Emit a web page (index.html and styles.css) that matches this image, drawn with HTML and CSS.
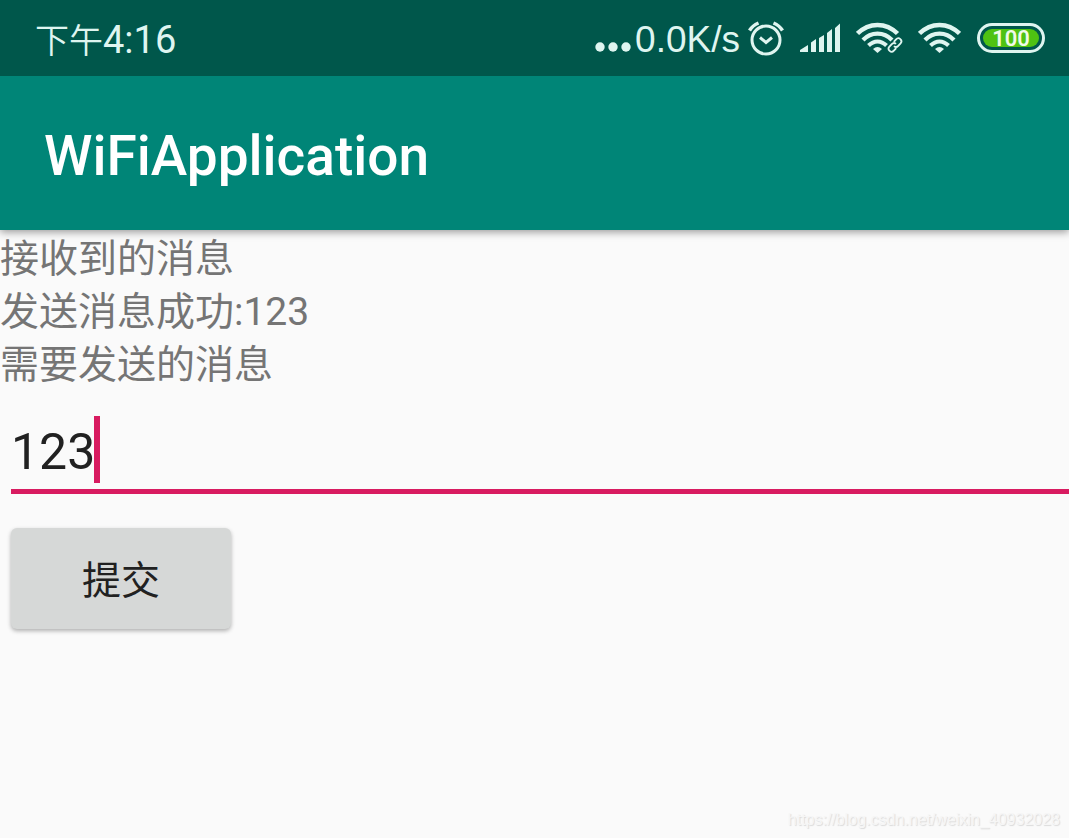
FILE: index.html
```
<!DOCTYPE html>
<html lang="zh-CN">
<head>
    <meta charset="UTF-8">
    <meta name="viewport" content="width=device-width, initial-scale=1.0">
    <title>WiFiApplication</title>
    <link rel="stylesheet" href="styles.css">
</head>
<body>
    <div class="status-bar">
        <div class="clock"><span class="clock-period">下午</span>4:16</div>
        <div class="status-icons">
            <svg class="dots" width="36" height="12" viewBox="0 0 36 12" fill="currentColor">
                <circle cx="5" cy="6" r="4.7"/>
                <circle cx="18" cy="6" r="4.7"/>
                <circle cx="31" cy="6" r="4.7"/>
            </svg>
            <span class="speed">0.0K/s</span>
            <!-- alarm -->
            <svg class="alarm" width="36" height="36" viewBox="0 0 36 36" fill="none" stroke="currentColor">
                <circle cx="18" cy="20" r="14" stroke-width="3"/>
                <path d="M12 17.500l6 5 6-5" stroke-width="3"/>
                <path d="M1.500 10.500Q4.500 5.500 10.500 3M34.500 10.500Q31.500 5.500 25.500 3" stroke-width="3.500"/>
            </svg>
            <!-- signal -->
            <svg class="signal" width="41" height="30" viewBox="0 0 41 30" fill="currentColor">
                <path d="M0 29v-2l8-5v7zM11 29V19.500l5-3.500v13zM19 29V15l5-3v17zM27 29V10l5-4v23zM35 29V5l5-4.500V29z"/>
            </svg>
            <!-- wifi with link -->
            <svg class="wifi-link" width="48" height="32" viewBox="0 0 48 32" fill="none" stroke="currentColor">
                <path d="M1.500 11.500C13 0 30 0 41.500 11.500" stroke-width="4.500"/>
                <path d="M7 18C15 9.500 28 9.500 36 18" stroke-width="4.200"/>
                <path d="M12.500 23.500C18 18 25 18 30.500 23.500" stroke-width="4"/>
                <path d="M17 27q4.500-4 9 0l-4.500 4z" fill="currentColor" stroke="none"/>
                <g stroke-width="1.800" transform="rotate(-48 39 23)">
                    <path d="M37.500 26h-3.500a3 3 0 0 1 0-6h3.500a3 3 0 0 1 3 3"/>
                    <path d="M40.500 20h3.500a3 3 0 0 1 0 6h-3.500a3 3 0 0 1-3-3"/>
                </g>
            </svg>
            <!-- wifi -->
            <svg class="wifi" width="43" height="32" viewBox="0 0 43 32" fill="none" stroke="currentColor">
                <path d="M1.500 11.500C13 0 30 0 41.500 11.500" stroke-width="4.500"/>
                <path d="M7 18C15 9.500 28 9.500 36 18" stroke-width="4.200"/>
                <path d="M12.500 23.500C18 18 25 18 30.500 23.500" stroke-width="4"/>
                <path d="M17 27q4.500-4 9 0l-4.500 4z" fill="currentColor" stroke="none"/>
            </svg>
            <div class="battery"><span class="battery-level">100</span></div>
        </div>
    </div>

    <header class="app-bar">
        <h1>WiFiApplication</h1>
    </header>

    <main>
        <p>接收到的消息</p>
        <p>发送消息成功:123</p>
        <label for="message">需要发送的消息</label>
        <div class="field">
            <input type="text" id="message" value="123">
            <span class="caret"></span>
        </div>
        <button type="button">提交</button>
    </main>

    <footer>https://blog.csdn.net/weixin_40932028</footer>
</body>
</html>
```

FILE: styles.css
```
* {
    box-sizing: border-box;
}

body {
    margin: 0;
    min-height: 100vh;
    display: flex;
    flex-direction: column;
    background-color: #fafafa;
    font-family: Roboto, "Noto Sans CJK SC", sans-serif;
    overflow-x: hidden;
}

.status-bar {
    position: relative;
    z-index: 1;
    display: flex;
    align-items: center;
    justify-content: space-between;
    height: 76px;
    padding: 0 24px 0 35px;
    background-color: #00574b;
    color: #dff5f0;
}

.clock {
    font-size: 38px;
    line-height: 48px;
    padding-top: 4px;
}

.clock-period {
    font-size: 34px;
    font-weight: 350;
}

.status-icons {
    display: flex;
    align-items: center;
}

.dots {
    margin-top: 18px;
    margin-right: 4px;
}

.speed {
    font-family: "Liberation Sans", sans-serif;
    font-size: 37px;
    line-height: 48px;
    padding-top: 4px;
}

.alarm {
    margin-left: 8px;
}

.signal {
    margin-left: 16px;
}

.wifi-link {
    margin-left: 15px;
}

.wifi {
    margin-left: 14px;
}

.battery {
    width: 68px;
    height: 30px;
    margin-left: 16px;
    padding: 3px;
    border: 3px solid #dff5f0;
    border-radius: 15px;
}

.battery-level {
    display: block;
    height: 18px;
    border-radius: 9px;
    background-color: #4fc212;
    color: #f0fae8;
    font-family: Roboto, sans-serif;
    font-size: 22px;
    font-weight: 600;
    line-height: 20px;
    text-align: center;
}

.app-bar {
    height: 154px;
    padding: 40px 44px;
    background-color: #008577;
    box-shadow: 0 2px 8px rgba(0, 0, 0, 0.4);
}

h1 {
    margin: 0;
    color: #fff;
    font-size: 55px;
    font-weight: 500;
    line-height: 80px;
}

main {
    display: flex;
    flex-direction: column;
    align-items: flex-start;
    padding-top: 3px;
    color: #757575;
    font-size: 39px;
    line-height: 53px;
}

p {
    margin: 0;
}

.field {
    position: relative;
    align-self: stretch;
    margin: 21px 0 34px 11px;
}

input {
    display: block;
    width: 100%;
    height: 81px;
    padding: 2px 0 0;
    border: none;
    border-bottom: 5px solid #d81b60;
    background: none;
    outline: none;
    color: #212121;
    font-family: inherit;
    font-size: 50px;
}

/* text cursor after the typed value */
.caret {
    position: absolute;
    top: 3px;
    left: 83px;
    width: 6px;
    height: 67px;
    background-color: #d81b60;
}

button {
    width: 220px;
    height: 101px;
    margin-left: 11px;
    padding: 0 0 4px;
    border: none;
    border-radius: 6px;
    background-color: #d6d8d7;
    box-shadow: 0 2px 4px rgba(0, 0, 0, 0.3);
    color: #212121;
    font-family: inherit;
    font-size: 39px;
}

footer {
    margin-top: auto;
    padding: 0 9px 8px;
    color: #f6f6f6;
    font-family: "Liberation Sans", sans-serif;
    font-size: 16px;
    line-height: 20px;
    text-align: right;
    text-shadow: 1px 1px 1px #dadada;
}
```
